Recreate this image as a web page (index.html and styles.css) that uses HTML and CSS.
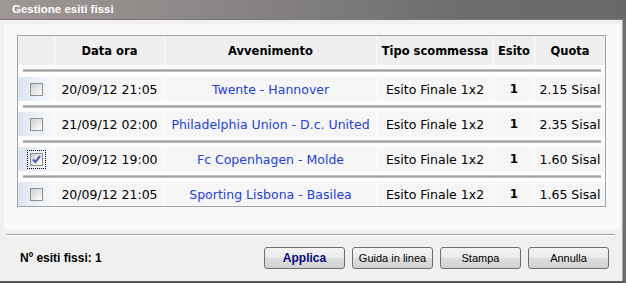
FILE: index.html
```html
<!DOCTYPE html>
<html lang="it">
<head>
  <meta charset="UTF-8">
  <title>Gestione esiti fissi</title>
  <link rel="stylesheet" href="styles.css">
</head>
<body>
  <div class="window">
    <!-- Barra del titolo -->
    <div class="titlebar">Gestione esiti fissi</div>

    <div class="window-body">
      <div class="panel">
        <div class="grid">
          <div class="th"></div>
          <div class="th">Data ora</div>
          <div class="th">Avvenimento</div>
          <div class="th">Tipo scommessa</div>
          <div class="th">Esito</div>
          <div class="th">Quota</div>
          <div class="sep sep-first"><span></span></div>

          <div class="td check"><span class="box"></span></div>
          <div class="td">20/09/12 21:05</div>
          <div class="td link">Twente - Hannover</div>
          <div class="td">Esito Finale 1x2</div>
          <div class="td bold">1</div>
          <div class="td">2.15 Sisal</div>
          <div class="sep"><span></span></div>

          <div class="td check"><span class="box"></span></div>
          <div class="td">21/09/12 02:00</div>
          <div class="td link">Philadelphia Union - D.c. United</div>
          <div class="td">Esito Finale 1x2</div>
          <div class="td bold">1</div>
          <div class="td">2.35 Sisal</div>
          <div class="sep"><span></span></div>

          <div class="td check"><span class="box checked focus">
            <svg width="11" height="11" viewBox="0 0 11 11"><path d="M2 5.5 L4.5 8 L9 2" fill="none" stroke="#3b56b8" stroke-width="2"/></svg>
          </span></div>
          <div class="td">20/09/12 19:00</div>
          <div class="td link">Fc Copenhagen - Molde</div>
          <div class="td">Esito Finale 1x2</div>
          <div class="td bold">1</div>
          <div class="td">1.60 Sisal</div>
          <div class="sep"><span></span></div>

          <div class="td check"><span class="box"></span></div>
          <div class="td">20/09/12 21:05</div>
          <div class="td link">Sporting Lisbona - Basilea</div>
          <div class="td">Esito Finale 1x2</div>
          <div class="td bold">1</div>
          <div class="td">1.65 Sisal</div>
        </div>
      </div>

      <!-- Piede con contatore e pulsanti -->
      <div class="footer">
        <div class="count">Nº esiti fissi: 1</div>
        <div class="buttons">
          <button class="btn primary">Applica</button>
          <button class="btn">Guida in linea</button>
          <button class="btn">Stampa</button>
          <button class="btn">Annulla</button>
        </div>
      </div>
    </div>
  </div>
</body>
</html>
```

FILE: styles.css
```css
* {
  margin: 0;
  padding: 0;
  box-sizing: border-box;
}
body {
  width: 626px;
  height: 283px;
  background: #f0f0f0;
  font-family: 'DejaVu Sans', Verdana, sans-serif;
  overflow: hidden;
}
.window {
  width: 626px;
  height: 283px;
  display: flex;
  flex-direction: column;
}
.titlebar {
  height: 20px;
  line-height: 19px;
  padding-left: 12px;
  color: #fff;
  font-family: 'Liberation Sans', Arial, sans-serif;
  font-weight: bold;
  font-size: 11.5px;
  background: linear-gradient(to right, #9f9795, #8a8685 35%, #6c6c6c 75%, #686868);
  border-bottom: 1px solid #7c7878;
}
.window-body {
  flex: 1;
  border-right: 3px solid #6e6e6e;
  border-bottom: 2px solid #585858;
  box-shadow: inset -1px 0 0 #a8a8a8;
  display: flex;
  flex-direction: column;
}
/* Pannello chiaro con la tabella */
.panel {
  margin: 4px 3px 0 4px;
  height: 206px;
  padding: 11px 0 0 13px;
  background: #f9f9f9;
}
.grid {
  width: 589px;
  display: grid;
  grid-template-columns: 36px 109px 211px 116px 40px 70px;
  grid-template-rows: 29px 12px 24px 11px 24px 11px 24px 11px 24px;
  column-gap: 1px;
  border: 1px solid #a3a3a3;
  background: #fdfdfd;
}
.th {
  background: #efefef;
  font-weight: bold;
  font-size: 11.5px;
  color: #000;
  display: flex;
  align-items: center;
  justify-content: center;
}
.td {
  background: #f6f6f6;
  font-size: 12.5px;
  color: #000;
  display: flex;
  align-items: center;
  justify-content: center;
  white-space: nowrap;
}
.td.link {
  color: #2340d8;
}
.td.bold {
  font-weight: bold;
  font-size: 12px;
}
.td.check {
  background: linear-gradient(to right, #dde5f2, #eef2f9 60%, #f5f7fb);
}
.sep {
  grid-column: 1 / -1;
  padding: 4px 4px 0 5px;
  background: #fdfdfd;
}
.sep span {
  display: block;
  height: 3px;
  background: linear-gradient(to bottom, #cfcfcf, #9f9f9f, #cfcfcf);
}
.box {
  width: 13px;
  height: 13px;
  border: 1px solid #8e8f8f;
  background: linear-gradient(135deg, #cfcfcf, #f0f0f0 70%, #fff);
  display: flex;
  align-items: center;
  justify-content: center;
}
.box svg {
  display: block;
}
.box.focus {
  outline: 1px dotted #000;
  outline-offset: 2px;
}
/* Piede */
.footer {
  margin: 4px 8px 0 7px;
  border-top: 1px solid #a0a0a0;
  box-shadow: inset 0 1px 0 #fff;
  padding: 12px 6px 0 13px;
  display: flex;
  align-items: flex-start;
  justify-content: space-between;
}
.count {
  font-family: 'Liberation Sans', Arial, sans-serif;
  font-weight: bold;
  font-size: 12px;
  line-height: 22px;
  color: #000;
}
.buttons {
  display: flex;
  gap: 7px;
}
.btn {
  width: 81px;
  height: 22px;
  border: 1px solid #707070;
  border-radius: 3px;
  background: linear-gradient(to bottom, #f4f4f4, #ececec 45%, #dcdcdc 55%, #d2d2d2);
  font-family: 'Liberation Sans', Arial, sans-serif;
  font-size: 11px;
  color: #000;
}
.btn.primary {
  color: #0a0a80;
  font-weight: bold;
  font-size: 12px;
}
```
